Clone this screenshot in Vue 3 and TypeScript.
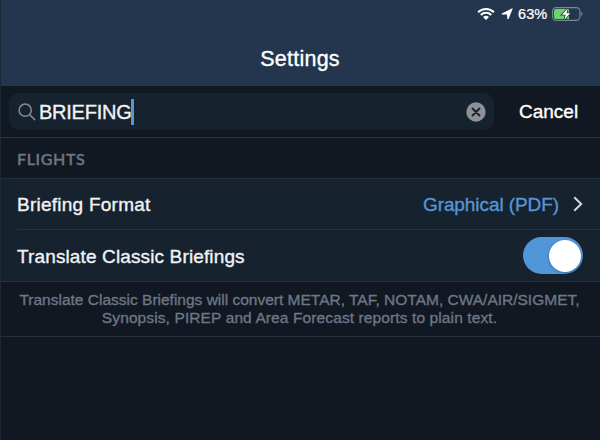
<script setup lang="ts">
import { ref } from 'vue'

const query = ref('BRIEFING')
const translate = ref(true)
const batteryLevel = '63%'
</script>

<template>
  <div class="screen">
    <header class="header">
      <div class="status">
        <svg class="wifi" width="18" height="14" viewBox="0 0 18 14">
          <path d="M1.1 5.2a11.2 11.2 0 0 1 15.8 0M3.8 8a7.3 7.3 0 0 1 10.4 0" fill="none" stroke="#fff" stroke-width="2.1" />
          <path d="M9 13 6 10q3-2.6 6 0z" fill="#fff" />
        </svg>
        <svg class="locate" width="12" height="12" viewBox="0 0 12 12">
          <path d="M11.2.8 7 11 6.4 6 .9 6z" fill="#fff" stroke="#fff" stroke-width="1" stroke-linejoin="round" />
        </svg>
        <span class="percent">{{ batteryLevel }}</span>
        <svg class="battery" width="31" height="14" viewBox="0 0 31 14">
          <rect x=".6" y=".6" width="27.3" height="12.8" rx="3.6" fill="none" stroke="#7d8795" stroke-width="1.1" />
          <path d="M4 2h13v10H4a2 2 0 0 1-2-2V4a2 2 0 0 1 2-2z" fill="#69d56b" />
          <path d="M29.2 4.8q2.5 2.2 0 4.4z" fill="#7d8795" />
          <path d="M15.8 1.2 9.8 7.7h3.9L12.4 12.8 18.2 6.3h-3.7z" fill="#fff" stroke="#24364e" stroke-width="1.6" paint-order="stroke" />
        </svg>
      </div>
      <h1 class="title"><span>Settings</span></h1>
    </header>
    <div class="search-bar">
      <div class="field">
        <svg class="glass" width="18" height="18" viewBox="0 0 18 18">
          <circle cx="7.2" cy="7.2" r="6.1" />
          <path d="m11.7 11.7 5 4.9" />
        </svg>
        <span class="query">{{ query }}</span><i class="caret"></i>
        <svg class="clear" width="20" height="20" viewBox="0 0 20 20" @click="query = ''">
          <circle cx="10" cy="10" r="9.7" fill="#8f9097" />
          <path d="m6.5 6.5 7 7m0-7-7 7" stroke="#17202c" stroke-width="1.8" stroke-linecap="round" />
        </svg>
      </div>
      <span class="cancel">Cancel</span>
    </div>
    <h2 class="section"><span>FLIGHTS</span></h2>
    <div class="rows">
      <div class="row first">
        <span class="label format">Briefing Format</span>
        <span class="value">Graphical (PDF)</span>
        <svg class="chevron" width="10" height="16" viewBox="0 0 10 16">
          <path d="m1.2 1.2 7 6.8-7 6.8" />
        </svg>
      </div>
      <div class="row">
        <span class="label translate">Translate Classic Briefings</span>
        <div class="switch" :class="{ on: translate }" @click="translate = !translate"><div class="knob"></div></div>
      </div>
    </div>
    <p class="note">
      <span class="line-one">Translate Classic Briefings will convert METAR, TAF, NOTAM, CWA/AIR/SIGMET,</span>
      <span class="line-two">Synopsis, PIREP and Area Forecast reports to plain text.</span>
    </p>
  </div>
</template>

<style>
body { background: #111822; }
</style>

<style scoped>
.screen {
  box-sizing: border-box;
  width: 600px;
  height: 440px;
  overflow: hidden;
  border-left: 1px solid #1d2835;
  background: #111822;
  color: #f1f3f5;
  font-family: "Liberation Sans", Arial, sans-serif;
  -webkit-text-stroke: 0.35px currentColor;
  white-space: nowrap;
}
.header {
  box-sizing: border-box;
  height: 86px;
  margin-left: -1px;
  padding-top: 7px;
  background: #24364e;
  color: #fff;
}
.status {
  display: flex;
  align-items: center;
  height: 14px;
  padding-left: 477px;
}
.locate { margin-left: 6px; }
.percent {
  width: 30px;
  margin-left: 5px;
  font-size: 14.5px;
  letter-spacing: 0.1px;
  -webkit-text-stroke-width: 0.2px;
}
.battery { margin-left: 4px; }
.title {
  margin: 26px 0 0;
  font-size: 21.5px;
  font-weight: 400;
  line-height: 25px;
  letter-spacing: 0.25px;
  text-align: center;
}
.search-bar {
  box-sizing: border-box;
  display: flex;
  align-items: center;
  height: 52px;
  padding-left: 8px;
  border-bottom: 1px solid #29323d;
}
.field {
  display: flex;
  align-items: center;
  width: 485px;
  height: 37px;
  border-radius: 10px;
  background: #17222f;
}
.glass {
  margin-left: 9px;
  fill: none;
  stroke: #858a93;
  stroke-width: 1.5;
  stroke-linecap: round;
}
.query {
  margin-left: 3px;
  padding-top: 1px;
  font-size: 20px;
  letter-spacing: -0.25px;
}
.caret {
  width: 3px;
  height: 26px;
  background: #5596d6;
}
.clear { margin: 0 8px 0 auto; }
.cancel {
  margin-left: 25px;
  font-size: 19px;
  color: #fff;
}
.section {
  box-sizing: border-box;
  height: 41px;
  margin: 0;
  padding-left: 16px;
  border-bottom: 1px solid #222d39;
  color: #6d7684;
  font: 500 16px/41px Lato, sans-serif;
  letter-spacing: 0.65px;
  -webkit-text-stroke-width: 0.45px;
}
.rows {
  background: #17222f;
  border-bottom: 1px solid #27313c;
}
.row {
  display: flex;
  align-items: center;
  box-sizing: border-box;
  height: 51px;
  margin-left: 16px;
  padding-right: 17px;
  font-size: 19px;
}
.first { border-bottom: 1px solid #29333e; }
.label,
.value { padding-top: 2px; }
.label { letter-spacing: 0.25px; }
.translate { letter-spacing: 0.13px; }
.value {
  margin-left: auto;
  color: #5596d6;
  letter-spacing: -0.08px;
}
.chevron {
  margin-left: 14px;
  fill: none;
  stroke: #d4d6d9;
  stroke-width: 2;
}
.switch {
  display: flex;
  align-items: center;
  box-sizing: border-box;
  width: 60px;
  height: 37px;
  margin-left: auto;
  padding: 0 2px;
  border-radius: 19px;
  background: #3b4652;
}
.switch.on {
  justify-content: flex-end;
  background: #5196d9;
}
.knob {
  width: 32px;
  height: 32px;
  border-radius: 50%;
  background: #fff;
  box-shadow: 0 1px 3px #17345466;
}
.note {
  display: flex;
  flex-direction: column;
  align-items: center;
  box-sizing: border-box;
  height: 55px;
  margin: 0;
  padding: 9px 2px 0 0;
  border-bottom: 1px solid #26303c;
  color: #6d7684;
  font-size: 15.5px;
  line-height: 17.5px;
}
.line-two { letter-spacing: 0.11px; }
</style>
